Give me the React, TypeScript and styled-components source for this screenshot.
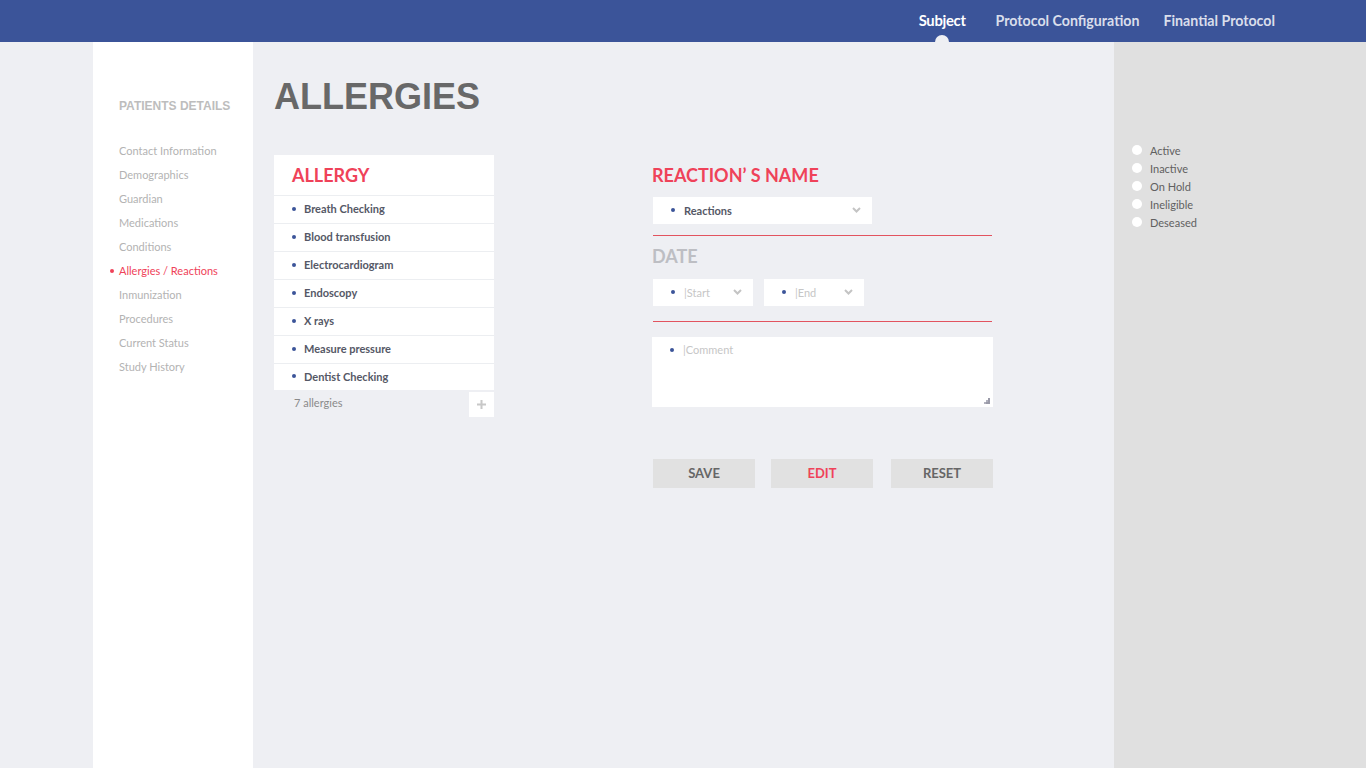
import React from "react";
import styled, { createGlobalStyle } from "styled-components";

const RED = "#ef4259";
const BLUE = "#3b5499";

const Global = createGlobalStyle`
  html, body { margin: 0; padding: 0; background: #eeeff3; }
  body { font-family: Lato, "Open Sans", sans-serif; }
  * { box-sizing: border-box; }
`;

const Header = styled.header`
  height: 42px;
  background: ${BLUE};
  display: flex;
  justify-content: flex-end;
  align-items: center;
  padding-right: 91px;
`;

const NavItem = styled.div<{ $active?: boolean }>`
  position: relative;
  font-family: Lato, sans-serif;
  font-weight: 700;
  font-size: ${(p) => (p.$active ? "14.8px" : "14.2px")};
  color: ${(p) => (p.$active ? "#ffffff" : "#d9deeb")};
  margin-left: 24px;
  height: 42px;
  line-height: 41px;
  letter-spacing: ${(p) => (p.$active ? "-0.3px" : "0")};
  &:first-child { margin-right: 6px; }
`;

const ActiveDot = styled.span`
  position: absolute;
  left: 50%;
  bottom: 0;
  width: 14px;
  height: 7px;
  margin-left: -7px;
  background: #eeeff3;
  border-radius: 7px 7px 0 0;
`;

const Body = styled.div`
  display: flex;
  min-height: 726px;
`;

const LeftGutter = styled.div`
  width: 93px;
  flex: none;
`;

const Sidebar = styled.aside`
  width: 160px;
  flex: none;
  background: #fff;
  padding: 57px 0 0 26px;
`;

const SideTitle = styled.div`
  font-family: "Liberation Sans", Arial, sans-serif;
  font-weight: 700;
  font-size: 12px;
  color: #bdbdbd;
  line-height: 15px;
  margin-bottom: 25px;
`;

const SideItem = styled.div<{ $active?: boolean }>`
  position: relative;
  font-size: 11px;
  line-height: 24px;
  color: ${(p) => (p.$active ? RED : "#b3b3b3")};
  ${(p) =>
    p.$active &&
    `&::before {
      content: "";
      position: absolute;
      left: -9px;
      top: 10px;
      width: 4px;
      height: 4px;
      border-radius: 50%;
      background: ${RED};
    }`}
`;

const Main = styled.main`
  flex: 1;
  padding: 32px 0 0 21px;
`;

const Title = styled.h1`
  margin: 0;
  font-family: "Liberation Sans", Arial, sans-serif;
  font-weight: 700;
  font-size: 36px;
  line-height: 46px;
  color: #686868;
`;

const Columns = styled.div`
  display: flex;
  margin-top: 35px;
`;

const AllergyCol = styled.div`
  width: 220px;
  flex: none;
`;

const Card = styled.div`
  background: #fff;
`;

const CardHead = styled.div`
  height: 41px;
  padding: 0 18px;
  display: flex;
  align-items: center;
  font-weight: 700;
  font-size: 18px;
  color: ${RED};
  border-bottom: 1px solid #eceef1;
`;

const Row = styled.div<{ $last?: boolean }>`
  height: ${(p) => (p.$last ? "26px" : "28px")};
  display: flex;
  align-items: center;
  padding: 0 0 2px 18px;
  font-size: 11px;
  font-weight: 700;
  color: #555866;
  border-bottom: ${(p) => (p.$last ? "none" : "1px solid #eceef1")};
`;

const Bullet = styled.span<{ $gap?: number }>`
  width: 4px;
  height: 4px;
  border-radius: 50%;
  background: ${BLUE};
  flex: none;
  margin-right: ${(p) => p.$gap ?? 8}px;
`;

const CardFoot = styled.div`
  display: flex;
  justify-content: space-between;
  align-items: flex-start;
  padding-left: 20px;
  height: 28px;
`;

const FootText = styled.span`
  font-size: 11px;
  color: #8a8a8a;
  line-height: 26px;
`;

const PlusBtn = styled.div`
  width: 25px;
  height: 25px;
  margin-top: 2px;
  background: #fff;
  display: flex;
  align-items: center;
  justify-content: center;
`;

const FormCol = styled.div`
  margin-left: 158px;
  width: 341px;
  padding-top: 9px;
`;

const Label = styled.div<{ $muted?: boolean }>`
  font-weight: 700;
  font-size: 18px;
  line-height: 22px;
  color: ${(p) => (p.$muted ? "#bdbec3" : RED)};
  margin-bottom: ${(p) => (p.$muted ? 12 : 11)}px;
`;

const SelectRow = styled.div`
  display: flex;
  gap: 11px;
  padding-left: 1px;
`;

const Select = styled.div<{ $w: number; $muted?: boolean }>`
  width: ${(p) => p.$w}px;
  height: 27px;
  background: #fff;
  display: flex;
  align-items: center;
  padding: 0 11px 1px 18px;
  font-size: 11px;
  font-weight: ${(p) => (p.$muted ? 400 : 700)};
  color: ${(p) => (p.$muted ? "#c6c6c6" : "#555866")};
`;

const SelectText = styled.span`
  flex: 1;
`;

const Divider = styled.div<{ $top: number; $bottom: number }>`
  height: 1px;
  background: #e2535f;
  margin: ${(p) => p.$top}px 0 ${(p) => p.$bottom}px 1px;
  width: 339px;
`;

const Comment = styled.div`
  position: relative;
  height: 70px;
  width: 341px;
  background: #fff;
  display: flex;
  align-items: flex-start;
  padding: 6px 0 0 18px;
  font-size: 11px;
  color: #c6c6c6;
  line-height: 13px;
`;

const CommentBullet = styled(Bullet)`
  margin-top: 5px;
`;

const Grip = styled.svg`
  position: absolute;
  right: 3px;
  bottom: 3px;
`;

const Buttons = styled.div`
  display: flex;
  gap: 16px;
  margin-top: 52px;
  padding-left: 1px;
`;

const Btn = styled.div<{ $red?: boolean; $w: number; $ml?: number }>`
  width: ${(p) => p.$w}px;
  height: 29px;
  margin-left: ${(p) => p.$ml ?? 0}px;
  background: #e1e1e1;
  display: flex;
  align-items: center;
  justify-content: center;
  padding-bottom: 1px;
  font-weight: 700;
  font-size: 13px;
  color: ${(p) => (p.$red ? RED : "#666")};
`;

const RightPanel = styled.aside`
  width: 252px;
  flex: none;
  background: #e0e0e0;
  padding: 99px 0 0 18px;
`;

const Radio = styled.div`
  display: flex;
  align-items: center;
  height: 18px;
  font-size: 11px;
  color: #606060;
`;

const Circle = styled.span`
  width: 10px;
  height: 10px;
  border-radius: 50%;
  background: #fff;
  margin-right: 8px;
`;

const Chevron = () => (
  <svg width="9" height="6" viewBox="0 0 9 6">
    <path d="M1 1 L4.5 4.5 L8 1" fill="none" stroke="#c4c4c4" strokeWidth="2" />
  </svg>
);

const sideItems = [
  "Contact Information",
  "Demographics",
  "Guardian",
  "Medications",
  "Conditions",
  "Allergies / Reactions",
  "Inmunization",
  "Procedures",
  "Current Status",
  "Study History",
];

const allergies = [
  "Breath Checking",
  "Blood transfusion",
  "Electrocardiogram",
  "Endoscopy",
  "X rays",
  "Measure pressure",
  "Dentist Checking",
];

const statuses = ["Active", "Inactive", "On Hold", "Ineligible", "Deseased"];

export default function App() {
  return (
    <>
      <Global />
      <Header>
        <NavItem $active>
          Subject
          <ActiveDot />
        </NavItem>
        <NavItem>Protocol Configuration</NavItem>
        <NavItem>Finantial Protocol</NavItem>
      </Header>
      <Body>
        <LeftGutter />
        <Sidebar>
          <SideTitle>PATIENTS DETAILS</SideTitle>
          {sideItems.map((s) => (
            <SideItem key={s} $active={s === "Allergies / Reactions"}>
              {s}
            </SideItem>
          ))}
        </Sidebar>
        <Main>
          <Title>ALLERGIES</Title>
          <Columns>
            <AllergyCol>
              <Card>
                <CardHead>ALLERGY</CardHead>
                {allergies.map((a, i) => (
                  <Row key={a} $last={i === allergies.length - 1}>
                    <Bullet />
                    {a}
                  </Row>
                ))}
              </Card>
              <CardFoot>
                <FootText>7 allergies</FootText>
                <PlusBtn>
                  <svg width="9" height="9" viewBox="0 0 9 9">
                    <path d="M4.5 0 V9 M0 4.5 H9" stroke="#c8c8c8" strokeWidth="2" />
                  </svg>
                </PlusBtn>
              </CardFoot>
            </AllergyCol>
            <FormCol>
              <Label>REACTION’ S NAME</Label>
              <SelectRow>
                <Select $w={219}>
                  <Bullet $gap={9} />
                  <SelectText>Reactions</SelectText>
                  <Chevron />
                </Select>
              </SelectRow>
              <Divider $top={11} $bottom={9} />
              <Label $muted>DATE</Label>
              <SelectRow>
                <Select $w={100} $muted>
                  <Bullet $gap={9} />
                  <SelectText>|Start</SelectText>
                  <Chevron />
                </Select>
                <Select $w={100} $muted>
                  <Bullet $gap={9} />
                  <SelectText>|End</SelectText>
                  <Chevron />
                </Select>
              </SelectRow>
              <Divider $top={15} $bottom={15} />
              <Comment>
                <CommentBullet $gap={9} />
                |Comment
                <Grip width="6" height="6" viewBox="0 0 6 6">
                  <rect x="4" y="0" width="2" height="2" fill="#9a9aa8" />
                  <rect x="2" y="2" width="2" height="2" fill="#b0b0bc" />
                  <rect x="4" y="2" width="2" height="2" fill="#9a9aa8" />
                  <rect x="0" y="4" width="2" height="2" fill="#b0b0bc" />
                  <rect x="2" y="4" width="2" height="2" fill="#9a9aa8" />
                  <rect x="4" y="4" width="2" height="2" fill="#9a9aa8" />
                </Grip>
              </Comment>
              <Buttons>
                <Btn $w={102}>SAVE</Btn>
                <Btn $w={102} $red>EDIT</Btn>
                <Btn $w={102} $ml={2}>RESET</Btn>
              </Buttons>
            </FormCol>
          </Columns>
        </Main>
        <RightPanel>
          {statuses.map((s) => (
            <Radio key={s}>
              <Circle />
              {s}
            </Radio>
          ))}
        </RightPanel>
      </Body>
    </>
  );
}
